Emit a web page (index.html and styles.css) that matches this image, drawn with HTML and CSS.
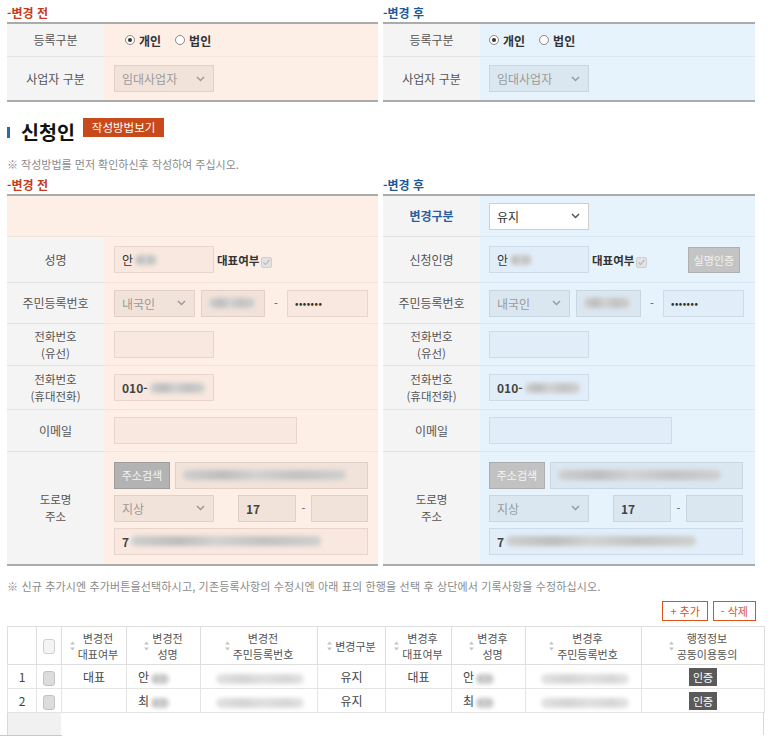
FILE: index.html
```html
<!DOCTYPE html>
<html lang="ko">
<head>
<meta charset="utf-8">
<title>신청인</title>
<link rel="stylesheet" href="styles.css">
</head>
<body>
<div class="page">

  <div class="cols">
    <section class="panel before">
      <h4 class="sub">-변경 전</h4>
      <div class="form">
        <div class="row r33">
          <div class="lbl">등록구분</div>
          <div class="val pad-radio">
            <span class="radio on"></span><span class="rtxt">개인</span>
            <span class="radio"></span><span class="rtxt">법인</span>
          </div>
        </div>
        <div class="row r43">
          <div class="lbl">사업자 구분</div>
          <div class="val">
            <span class="fld sel ro w100"><span class="muted">임대사업자</span><svg class="chev" width="9" height="6" viewBox="0 0 9 6"><path d="M1 1l3.5 3.5L8 1" fill="none" stroke="#9a9a9a" stroke-width="1.5"/></svg></span>
          </div>
        </div>
      </div>
    </section>

    <section class="panel after">
      <h4 class="sub">-변경 후</h4>
      <div class="form">
        <div class="row r33">
          <div class="lbl">등록구분</div>
          <div class="val">
            <span class="radio on"></span><span class="rtxt">개인</span>
            <span class="radio"></span><span class="rtxt">법인</span>
          </div>
        </div>
        <div class="row r43">
          <div class="lbl">사업자 구분</div>
          <div class="val">
            <span class="fld sel ro w100"><span class="muted">임대사업자</span><svg class="chev" width="9" height="6" viewBox="0 0 9 6"><path d="M1 1l3.5 3.5L8 1" fill="none" stroke="#9a9a9a" stroke-width="1.5"/></svg></span>
          </div>
        </div>
      </div>
    </section>
  </div>

  <div class="title-row">
    <span class="bar"></span>
    <h2 class="title">신청인</h2>
    <span class="guide-btn">작성방법보기</span>
  </div>
  <p class="note">※ 작성방법를 먼저 확인하신후 작성하여 주십시오.</p>

  <div class="cols">
    <section class="panel before">
      <h4 class="sub">-변경 전</h4>
      <div class="form">
        <div class="row r41 single"><div class="val"></div></div>
        <div class="row r46">
          <div class="lbl">성명</div>
          <div class="val">
            <span class="fld w100">안<span class="blur bw22"></span></span>
            <span class="rep">대표여부</span><span class="chk"><svg width="9" height="9" viewBox="0 0 9 9"><path d="M1.5 4.5l2 2 4-4.5" fill="none" stroke="#bdbdbd" stroke-width="1.4"/></svg></span>
          </div>
        </div>
        <div class="row r41">
          <div class="lbl">주민등록번호</div>
          <div class="val">
            <span class="fld sel ro w81"><span class="muted">내국인</span><svg class="chev" width="9" height="6" viewBox="0 0 9 6"><path d="M1 1l3.5 3.5L8 1" fill="none" stroke="#9a9a9a" stroke-width="1.5"/></svg></span>
            <span class="fld ro w64 ml6"><span class="blur bw46"></span></span>
            <span class="dash w22">-</span>
            <span class="fld w81"><span class="dots">•••••••</span></span>
          </div>
        </div>
        <div class="row r42">
          <div class="lbl two">전화번호<br>(유선)</div>
          <div class="val"><span class="fld w100"></span></div>
        </div>
        <div class="row r44">
          <div class="lbl two">전화번호<br>(휴대전화)</div>
          <div class="val"><span class="fld w100"><b class="num">010-</b><span class="blur bw55"></span></span></div>
        </div>
        <div class="row r42">
          <div class="lbl">이메일</div>
          <div class="val"><span class="fld w183"></span></div>
        </div>
        <div class="row r112">
          <div class="lbl two">도로명<br>주소</div>
          <div class="val">
            <div class="addr">
              <div class="aline">
                <span class="search-btn">주소검색</span>
                <span class="fld ro w193 ml5"><span class="blur bw163"></span></span>
              </div>
              <div class="aline">
                <span class="fld sel ro w100"><span class="muted">지상</span><svg class="chev" width="9" height="6" viewBox="0 0 9 6"><path d="M1 1l3.5 3.5L8 1" fill="none" stroke="#9a9a9a" stroke-width="1.5"/></svg></span>
                <span class="fld ro w58 ml24"><b class="num">17</b></span>
                <span class="dash w15">-</span>
                <span class="fld ro w57"></span>
              </div>
              <div class="aline">
                <span class="fld w254"><b class="num">7</b><span class="blur bw190"></span></span>
              </div>
            </div>
          </div>
        </div>
      </div>
    </section>

    <section class="panel after">
      <h4 class="sub">-변경 후</h4>
      <div class="form">
        <div class="row r41">
          <div class="lbl key">변경구분</div>
          <div class="val">
            <span class="fld sel open w100"><span>유지</span><svg class="chev" width="9" height="6" viewBox="0 0 9 6"><path d="M1 1l3.5 3.5L8 1" fill="none" stroke="#555" stroke-width="1.5"/></svg></span>
          </div>
        </div>
        <div class="row r46">
          <div class="lbl">신청인명</div>
          <div class="val">
            <span class="fld w100">안<span class="blur bw22"></span></span>
            <span class="rep">대표여부</span><span class="chk"><svg width="9" height="9" viewBox="0 0 9 9"><path d="M1.5 4.5l2 2 4-4.5" fill="none" stroke="#bdbdbd" stroke-width="1.4"/></svg></span>
            <span class="verify-btn">실명인증</span>
          </div>
        </div>
        <div class="row r41">
          <div class="lbl">주민등록번호</div>
          <div class="val">
            <span class="fld sel ro w81"><span class="muted">내국인</span><svg class="chev" width="9" height="6" viewBox="0 0 9 6"><path d="M1 1l3.5 3.5L8 1" fill="none" stroke="#9a9a9a" stroke-width="1.5"/></svg></span>
            <span class="fld ro w65 ml6"><span class="blur bw46"></span></span>
            <span class="dash w22">-</span>
            <span class="fld w81"><span class="dots">•••••••</span></span>
          </div>
        </div>
        <div class="row r42">
          <div class="lbl two">전화번호<br>(유선)</div>
          <div class="val"><span class="fld w100"></span></div>
        </div>
        <div class="row r44">
          <div class="lbl two">전화번호<br>(휴대전화)</div>
          <div class="val"><span class="fld w100"><b class="num">010-</b><span class="blur bw55"></span></span></div>
        </div>
        <div class="row r42">
          <div class="lbl">이메일</div>
          <div class="val"><span class="fld w183"></span></div>
        </div>
        <div class="row r112">
          <div class="lbl two">도로명<br>주소</div>
          <div class="val">
            <div class="addr">
              <div class="aline">
                <span class="search-btn light">주소검색</span>
                <span class="fld ro w193 ml5"><span class="blur bw163"></span></span>
              </div>
              <div class="aline">
                <span class="fld sel ro w100"><span class="muted">지상</span><svg class="chev" width="9" height="6" viewBox="0 0 9 6"><path d="M1 1l3.5 3.5L8 1" fill="none" stroke="#9a9a9a" stroke-width="1.5"/></svg></span>
                <span class="fld ro w58 ml24"><b class="num">17</b></span>
                <span class="dash w15">-</span>
                <span class="fld ro w57"></span>
              </div>
              <div class="aline">
                <span class="fld w254"><b class="num">7</b><span class="blur bw190"></span></span>
              </div>
            </div>
          </div>
        </div>
      </div>
    </section>
  </div>

  <p class="note note2">※ 신규 추가시엔 추가버튼을선택하시고, 기존등록사항의 수정시엔 아래 표의 한행을 선택 후 상단에서 기록사항을 수정하십시오.</p>

  <div class="grid-tools">
    <span class="tool-btn">+ 추가</span>
    <span class="tool-btn">- 삭제</span>
  </div>

  <table class="grid">
    <colgroup>
      <col class="g1"><col class="g2"><col class="g3"><col class="g4"><col class="g5">
      <col class="g6"><col class="g7"><col class="g8"><col class="g9"><col class="g10">
    </colgroup>
    <thead>
      <tr>
        <th></th>
        <th><span class="gcb head"></span></th>
        <th><div class="hc"><svg class="sort" width="5" height="10" viewBox="0 0 5 10"><path d="M2.5 0.5L5 3.5H0z M2.5 9.5L5 6.5H0z" fill="#c4c4c4"/></svg><span class="ht"><span>변경전</span><span>대표여부</span></span></div></th>
        <th><div class="hc"><svg class="sort" width="5" height="10" viewBox="0 0 5 10"><path d="M2.5 0.5L5 3.5H0z M2.5 9.5L5 6.5H0z" fill="#c4c4c4"/></svg><span class="ht"><span>변경전</span><span>성명</span></span></div></th>
        <th><div class="hc"><svg class="sort" width="5" height="10" viewBox="0 0 5 10"><path d="M2.5 0.5L5 3.5H0z M2.5 9.5L5 6.5H0z" fill="#c4c4c4"/></svg><span class="ht"><span>변경전</span><span>주민등록번호</span></span></div></th>
        <th><div class="hc"><svg class="sort" width="5" height="10" viewBox="0 0 5 10"><path d="M2.5 0.5L5 3.5H0z M2.5 9.5L5 6.5H0z" fill="#c4c4c4"/></svg><span class="ht"><span>변경구분</span></span></div></th>
        <th><div class="hc"><svg class="sort" width="5" height="10" viewBox="0 0 5 10"><path d="M2.5 0.5L5 3.5H0z M2.5 9.5L5 6.5H0z" fill="#c4c4c4"/></svg><span class="ht"><span>변경후</span><span>대표여부</span></span></div></th>
        <th><div class="hc"><svg class="sort" width="5" height="10" viewBox="0 0 5 10"><path d="M2.5 0.5L5 3.5H0z M2.5 9.5L5 6.5H0z" fill="#c4c4c4"/></svg><span class="ht"><span>변경후</span><span>성명</span></span></div></th>
        <th><div class="hc"><svg class="sort" width="5" height="10" viewBox="0 0 5 10"><path d="M2.5 0.5L5 3.5H0z M2.5 9.5L5 6.5H0z" fill="#c4c4c4"/></svg><span class="ht"><span>변경후</span><span>주민등록번호</span></span></div></th>
        <th><div class="hc"><svg class="sort" width="5" height="10" viewBox="0 0 5 10"><path d="M2.5 0.5L5 3.5H0z M2.5 9.5L5 6.5H0z" fill="#c4c4c4"/></svg><span class="ht"><span>행정정보</span><span>공동이용동의</span></span></div></th>
      </tr>
    </thead>
    <tbody>
      <tr>
        <td class="rn">1</td>
        <td><span class="gcb"></span></td>
        <td>대표</td>
        <td class="left">안<span class="blur bw18"></span></td>
        <td><span class="blur bw88 soft"></span></td>
        <td>유지</td>
        <td>대표</td>
        <td class="left">안<span class="blur bw18"></span></td>
        <td><span class="blur bw88 soft"></span></td>
        <td><span class="auth">인증</span></td>
      </tr>
      <tr>
        <td class="rn">2</td>
        <td><span class="gcb"></span></td>
        <td></td>
        <td class="left">최<span class="blur bw18"></span></td>
        <td><span class="blur bw88 soft"></span></td>
        <td>유지</td>
        <td></td>
        <td class="left">최<span class="blur bw18"></span></td>
        <td><span class="blur bw88 soft"></span></td>
        <td><span class="auth">인증</span></td>
      </tr>
    </tbody>
  </table>
  <div class="grid-empty"><span class="grid-empty-side"></span></div>
  <div class="grid-scroll"></div>

</div>
</body>
</html>
```

FILE: styles.css
```css
* { box-sizing: border-box; }
html, body { margin: 0; padding: 0; background: #fff; }
body {
  font-family: "Noto Sans CJK KR", "Liberation Sans", sans-serif;
  font-size: 12px;
  color: #333;
  overflow: hidden;
}
.page { width: 773px; padding: 0 9px 0 7px; }

.cols {
  display: grid;
  grid-template-columns: 371px 372px;
  column-gap: 5px;
}

.sub {
  margin: 0;
  font-size: 12px;
  font-weight: bold;
  line-height: 16px;
  padding: 5px 0 1px;
}
.before .sub { color: #c63a1d; }
.after .sub { color: #1d5b98; }

.form {
  border-top: 2px solid #ababab;
  border-bottom: 2px solid #ababab;
}
.row { display: grid; grid-template-columns: 97px 1fr; }
.row.single { grid-template-columns: 1fr; }
.r33 { height: 33px; }
.r41 { height: 41px; }
.r42 { height: 42px; }
.r43 { height: 43px; }
.r44 { height: 44px; }
.r46 { height: 46px; }
.r112 { height: 112px; }

.lbl {
  background: #f4f4f4;
  border-bottom: 1px solid #e3e3e3;
  display: flex;
  align-items: center;
  justify-content: center;
  text-align: center;
  color: #555;
  font-size: 12px;
  line-height: 17.5px;
}
.lbl.two { font-size: 11.5px; line-height: 16.8px; }
.lbl.key { color: #2a5f9e; font-weight: bold; }
.val {
  display: flex;
  align-items: center;
  padding-left: 10px;
  border-bottom: 1px solid rgba(120, 90, 70, 0.07);
}
.after .val { padding-left: 9px; border-bottom-color: rgba(60, 100, 140, 0.07); }
.before .val { background: #fdeee6; }
.after .val { background: #e6f2fc; }
.row:last-child .lbl, .row:last-child .val { border-bottom: 0; }
.val.pad-radio { padding-left: 21px; }

.radio {
  width: 10px; height: 10px;
  border: 1px solid #8a8a8a;
  border-radius: 50%;
  background: #fff;
  display: inline-flex;
  align-items: center;
  justify-content: center;
  margin-right: 4px;
}
.radio.on::after {
  content: "";
  width: 4px; height: 4px;
  border-radius: 50%;
  background: #333;
}
.rtxt { font-weight: bold; font-size: 12px; color: #333; margin-right: 14px; }

.fld {
  height: 27px;
  display: inline-flex;
  align-items: center;
  padding: 0 7px;
  font-size: 12px;
  color: #333;
  flex: none;
}
.before .fld { background: rgba(120, 80, 60, 0.035); border: 1px solid rgba(120, 80, 60, 0.13); }
.after .fld { background: rgba(60, 90, 120, 0.025); border: 1px solid rgba(60, 90, 120, 0.12); }
.before .fld.ro { background: rgba(110, 90, 80, 0.075); }
.after .fld.ro { background: rgba(100, 100, 100, 0.075); }
.after .fld.open { background: #fff; border-color: #cfcfcf; }
.sel { justify-content: space-between; padding-right: 8px; }
.chev { flex: none; }
.muted { color: #9a9a9a; }
.num { font-weight: bold; color: #444; }
.dots { font-size: 9px; letter-spacing: 0.5px; color: #333; font-weight: bold; }

.w57 { width: 57px; }
.w58 { width: 58px; }
.w64 { width: 64px; }
.w65 { width: 65px; }
.w81 { width: 81px; }
.w100 { width: 100px; }
.w183 { width: 183px; }
.w193 { width: 193px; }
.w254 { width: 254px; }
.ml5 { margin-left: 5px; }
.ml6 { margin-left: 6px; }
.ml24 { margin-left: 24px; }
.dash { text-align: center; color: #555; font-size: 11px; flex: none; }
.w22 { width: 22px; }
.w15 { width: 15px; }

.rep { font-weight: bold; font-size: 11.5px; color: #333; margin-left: 3px; }
.chk {
  width: 11px; height: 11px;
  margin-left: 2px;
  margin-top: 6px;
  background: #e2e2e2;
  border: 1px solid #cfcfcf;
  border-radius: 2px;
  display: inline-flex;
  align-items: center;
  justify-content: center;
}
.verify-btn {
  margin-left: auto;
  margin-right: 15px;
  height: 26px;
  padding: 0 5px;
  display: inline-flex;
  align-items: center;
  background: #c4c4c4;
  border: 1px solid #b0b0b0;
  color: #f2f2f2;
  font-size: 11px;
}

.addr { display: flex; flex-direction: column; gap: 6px; }
.aline { display: flex; align-items: center; }
.search-btn {
  width: 56px; height: 27px;
  display: inline-flex; align-items: center; justify-content: center;
  background: #b3b3b3;
  border: 1px solid #9e9e9e;
  color: #f4f4f4;
  font-size: 11px;
  flex: none;
}
.search-btn.light { background: #c2c2c2; border-color: #adadad; }

.blur {
  display: inline-block;
  height: 10px;
  border-radius: 5px;
  background: linear-gradient(90deg, #cfcfcf, #bdbdbd 25%, #d2d2d2 45%, #c2c2c2 70%, #d0d0d0);
  filter: blur(2px);
  vertical-align: middle;
  margin-left: 2px;
}
.blur.soft { background: linear-gradient(90deg, #e2e2e2, #d4d4d4 30%, #e0e0e0 55%, #d6d6d6 80%, #e4e4e4); }
.bw18 { width: 18px; }
.bw22 { width: 22px; }
.bw46 { width: 46px; margin-left: 0; }
.bw55 { width: 55px; }
.bw88 { width: 88px; }
.bw163 { width: 163px; margin-left: 0; }
.bw190 { width: 190px; }

.title-row { display: flex; align-items: flex-start; margin-top: 16px; }
.bar { width: 3px; height: 11px; background: #2d6aa6; margin-top: 9px; flex: none; }
.title {
  margin: 1px 0 0 11px;
  font-size: 19.5px;
  line-height: 25px;
  font-weight: bold;
  color: #111;
}
.guide-btn {
  margin-left: 8px;
  height: 19px;
  line-height: 19px;
  padding: 0 9px;
  background: #c84a1b;
  color: #fff;
  font-size: 11.5px;
}

.note {
  margin: 12px 0 0;
  font-size: 11px;
  line-height: 16px;
  color: #8a8a8a;
}
.note.note2 { margin-top: 12px; letter-spacing: 0.15px; }

.grid-tools { display: flex; justify-content: flex-end; gap: 5px; margin-top: 7px; padding-right: 8px; }
.tool-btn {
  height: 20px;
  line-height: 18px;
  padding: 0 7px;
  border: 1px solid #d9541e;
  color: #d9541e;
  background: #fff;
  font-size: 11px;
}

.grid {
  margin-top: 5px;
  width: 757px;
  border-collapse: collapse;
  table-layout: fixed;
  border: 1px solid #d8d8d8;
}
.g1 { width: 29px; } .g2 { width: 25px; } .g3 { width: 65px; } .g4 { width: 74px; }
.g5 { width: 117px; } .g6 { width: 68px; } .g7 { width: 66px; } .g8 { width: 74px; }
.g9 { width: 116px; } .g10 { width: 123px; }
.grid th {
  height: 38px;
  border: 1px solid #dedede;
  font-weight: normal;
  color: #555;
  font-size: 11px;
  padding: 0;
  background: #fff;
}
.hc { display: flex; align-items: center; justify-content: center; gap: 3px; }
.ht { display: flex; flex-direction: column; align-items: center; }
.ht span { display: block; height: 16px; line-height: 16px; }
.sort { flex: none; }
.grid td {
  height: 24px;
  border: 1px solid #e4e4e4;
  text-align: center;
  color: #444;
  font-size: 12px;
  padding: 0;
}
.grid td.left { text-align: left; padding-left: 11px; }
.grid td.rn { color: #444; }
.gcb {
  display: inline-block;
  width: 12px; height: 15px;
  border-radius: 3px;
  background: #dcdcdc;
  border: 1px solid #c2c2c2;
  vertical-align: middle;
}
.gcb.head { background: #f4f4f4; border-color: #cfcfcf; }
.auth {
  display: inline-block;
  height: 18px;
  line-height: 18px;
  padding: 0 4px;
  background: #5a5a5a;
  color: #fff;
  font-size: 11px;
  vertical-align: middle;
}

.grid-empty {
  width: 757px;
  height: 22px;
  border-right: 1px solid #d8d8d8;
  border-left: 1px solid #d8d8d8;
}
.grid-empty-side { display: block; width: 53px; height: 22px; background: #f1f1f1; }
.grid-scroll { width: 62px; height: 3px; background: #c8c8c8; margin-left: -7px; }
```
